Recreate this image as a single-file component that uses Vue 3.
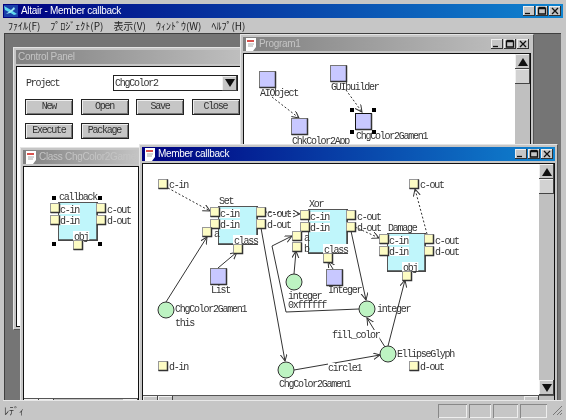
<script setup>
// pixel data below is in screen coordinates, each svg gets a viewBox at its client origin
const comp = (x, y, w, h, name, bottom, extra = []) => ({ x, y, w, h, name, bottom, extra })

const windows = [
  {
    id: 'control', title: 'Control Panel', left: 13, top: 47, width: 250, height: 283, noIcon: true
  },
  {
    id: 'program', title: 'Program1', left: 240, top: 34, width: 294, client: { x: 244, y: 54, w: 271, h: 140 }, vscroll: true,
    edges: [
      { d: 'M272 97L299 118', dashed: true, arrow: true },
      { d: 'M346 90L362 112', dashed: true, arrow: true }
    ],
    squares: [
      { x: 259, y: 71 }, { x: 330, y: 65 }, { x: 291, y: 118 }, { x: 355, y: 113, sel: true }
    ],
    handles: [[352, 110], [374, 110], [352, 132], [374, 132]],
    comps: [],
    circles: [],
    ports: [],
    texts: [
      { x: 260, y: 96, t: 'AIObject' },
      { x: 331, y: 90, t: 'GUIbuilder' },
      { x: 292, y: 144, t: 'ChkColor2App' },
      { x: 356, y: 139, t: 'ChgColor2Gamen1' }
    ]
  },
  {
    id: 'class', title: 'Class ChgColor2Gamen1', left: 20, top: 147, width: 122, client: { x: 24, y: 167, w: 114, h: 231 }, hscroll: true,
    edges: [], squares: [], circles: [], ports: [], texts: [],
    handles: [[54, 198], [100, 198], [54, 244], [100, 244]],
    comps: [comp(58, 202, 39, 38, 'callback', 'obj')]
  },
  {
    id: 'member', title: 'Member callback', active: true, left: 139, top: 144, width: 419, client: { x: 143, y: 164, w: 396, h: 231 }, vscroll: true, hscroll: true,
    edges: [
      { d: 'M168 188L210 211', dashed: true, arrow: true },
      { d: 'M166 302L207 237', arrow: true },
      { d: 'M218 268L237 252', arrow: true },
      { d: 'M261 228L285 361', arrow: true },
      { d: 'M359 309L286 312L272 246L292 236', arrow: true },
      { d: 'M294 274L296 251', arrow: true },
      { d: 'M333 269L328 261', arrow: true },
      { d: 'M351 231L366 300', arrow: true },
      { d: 'M265 212L300 214', dashed: true, arrow: true },
      { d: 'M355 227L379 238', dashed: true, arrow: true },
      { d: 'M427 234L415 189', dashed: true, arrow: true },
      { d: 'M388 346L405 280', arrow: true },
      { d: 'M385 347L378 336L367 318', arrow: true },
      { d: 'M294 370L380 355', arrow: true }
    ],
    squares: [{ x: 210, y: 268 }, { x: 326, y: 269 }],
    circles: [{ x: 166, y: 310 }, { x: 294, y: 282 }, { x: 286, y: 370 }, { x: 367, y: 309 }, { x: 388, y: 354 }],
    ports: [{ x: 158, y: 179 }, { x: 409, y: 179 }, { x: 158, y: 361 }, { x: 409, y: 361 }],
    handles: [],
    comps: [
      comp(218, 206, 39, 38, 'Set', 'class', [{ x: 202, y: 227, t: 'a' }]),
      comp(308, 209, 39, 44, 'Xor', 'class', [{ x: 292, y: 231, t: 'a' }, { x: 292, y: 242, t: 'b' }]),
      comp(387, 233, 38, 38, 'Damage', 'obj')
    ],
    texts: [
      { x: 169, y: 188, t: 'c-in' },
      { x: 420, y: 188, t: 'c-out' },
      { x: 169, y: 370, t: 'd-in' },
      { x: 420, y: 370, t: 'd-out' },
      { x: 211, y: 293, t: 'List' },
      { x: 328, y: 293, t: 'Integer' },
      { x: 175, y: 312, t: 'ChgColor2Gamen1' },
      { x: 175, y: 326, t: 'this' },
      { x: 288, y: 299, t: 'integer' },
      { x: 288, y: 308, t: '0xffffff' },
      { x: 279, y: 387, t: 'ChgColor2Gamen1' },
      { x: 377, y: 312, t: 'integer' },
      { x: 397, y: 357, t: 'EllipseGlyph' },
      { x: 332, y: 338, t: 'fill_color', bg: true },
      { x: 328, y: 371, t: 'circle1', bg: true }
    ]
  }
]

const menus = ['ﾌｧｲﾙ(F)', 'ﾌﾟﾛｼﾞｪｸﾄ(P)', '表示(V)', 'ｳｨﾝﾄﾞｳ(W)', 'ﾍﾙﾌﾟ(H)']
const captionPaths = [
  'M2 7.5H7',
  'M2.5 2.5H9.5V8H2.5ZM2.5 1.5H9.5',
  'M3 2L9 8M9 2L3 8'
]
const statusPanels = [29, 22, 25, 27]

// mdi area starts at (4, 33) on screen
const winStyle = (w) => ({
  left: w.left - 4 + 'px',
  top: w.top - 33 + 'px',
  width: w.width + 'px',
  height: w.height ? w.height + 'px' : 'auto'
})
const viewBox = (c) => `${c.x} ${c.y} ${c.w} ${c.h}`
</script>

<template>
  <div class="app">
    <div class="titlebar main-title">
      <svg class="app-icon" width="14" height="12" viewBox="0 0 14 12">
        <rect width="14" height="12" fill="#1a3fa8" />
        <path d="M0 1L7 5L13 9L10 10L5 7L1 5Z" fill="#5fd8ee" />
        <path d="M2 9L7 5L10 2L11 4L6 8Z" fill="#9fe8f5" />
      </svg>
      <span class="title-text">Altair - Member callback</span>
      <div class="caption">
        <button v-for="p in captionPaths" :key="p" class="cap-btn">
          <svg width="12" height="10" viewBox="0 0 12 10"><path :d="p" /></svg>
        </button>
      </div>
    </div>

    <div class="menubar">
      <span v-for="m in menus" :key="m" class="menu-item">{{ m }}</span>
    </div>

    <div class="mdi">
      <div v-for="w in windows" :key="w.id" class="win" :class="w.id" :style="winStyle(w)">
        <div class="titlebar" :class="{ inactive: !w.active }">
          <svg v-if="!w.noIcon" class="doc-icon" width="12" height="13" viewBox="0 0 12 13">
            <path d="M1 0H11V9L8 13H1Z" fill="#fff" />
            <rect x="2" y="2" width="7" height="2" fill="#d9534f" />
            <path d="M3 6H9M3 8H8" stroke="#aaa" />
          </svg>
          <span class="title-text">{{ w.title }}</span>
          <div v-if="!w.noIcon && w.id !== 'class'" class="caption">
            <button v-for="p in captionPaths" :key="p" class="cap-btn">
              <svg width="12" height="10" viewBox="0 0 12 10"><path :d="p" /></svg>
            </button>
          </div>
        </div>

        <div class="client">
          <div v-if="w.id === 'control'" class="panel">
            <div class="panel-row project-row">
              <span class="project-label">Project</span>
              <div class="combo">
                <span class="combo-value">ChgColor2</span>
                <span class="scroll-btn combo-btn"><i class="tri-down"></i></span>
              </div>
            </div>
            <div class="panel-row">
              <span class="btn">New</span>
              <span class="btn">Open</span>
              <span class="btn">Save</span>
              <span class="btn">Close</span>
            </div>
            <div class="panel-row">
              <span class="btn">Execute</span>
              <span class="btn">Package</span>
            </div>
          </div>

          <template v-else>
            <div class="pane">
              <svg class="canvas" :width="w.client.w" :height="w.client.h" :viewBox="viewBox(w.client)">
                <defs>
                  <marker :id="'arrow-' + w.id" markerUnits="userSpaceOnUse" markerWidth="8" markerHeight="8" refX="7" refY="3.5" orient="auto">
                    <path d="M0 0L7 3.5L0 7" fill="none" stroke="#333" />
                  </marker>
                </defs>

                <g v-for="c in w.comps" :key="c.name">
                  <rect class="comp-body" :x="c.x + 0.5" :y="c.y + 0.5" :width="c.w" :height="c.h" />
                  <path class="comp-shade" :d="`M${c.x} ${c.y + c.h}H${c.x + c.w}V${c.y}`" />
                  <rect class="label-bg" :x="c.x + 1" :y="c.y + 3" width="21" height="9" />
                  <rect class="label-bg" :x="c.x + 1" :y="c.y + 14" width="21" height="9" />
                  <rect class="label-bg" :x="c.x + 15" :y="c.y + c.h - 9" :width="c.bottom.length * 4.75 + 2" height="9" />
                </g>

                <path
                  v-for="e in w.edges"
                  :key="e.d"
                  class="edge"
                  :class="{ dashed: e.dashed }"
                  :d="e.d"
                  :marker-end="e.arrow ? `url(#arrow-${w.id})` : null"
                />

                <g v-for="s in w.squares" :key="s.x">
                  <rect class="square" :class="{ sel: s.sel }" :x="s.x + 0.5" :y="s.y + 0.5" width="16" height="16" />
                  <path class="square-shade" :d="`M${s.x + 0.5} ${s.y + 16.5}H${s.x + 16.5}V${s.y + 0.5}`" />
                </g>

                <circle v-for="c in w.circles" :key="c.x" class="node" :cx="c.x" :cy="c.y" r="8" />

                <g v-for="p in w.ports" :key="p.x + '-' + p.y">
                  <rect class="port" :x="p.x + 0.5" :y="p.y + 0.5" width="9" height="9" />
                  <path class="port-shade" :d="`M${p.x + 0.5} ${p.y + 9.5}H${p.x + 9.5}V${p.y + 0.5}`" />
                </g>

                <g v-for="c in w.comps" :key="c.name + '-ports'">
                  <g v-for="p in [
                    { x: c.x - 8, y: c.y + 1 }, { x: c.x - 8, y: c.y + 13 },
                    { x: c.x + c.w - 1, y: c.y + 1 }, { x: c.x + c.w - 1, y: c.y + 13 },
                    { x: c.x + 15, y: c.y + c.h },
                    ...c.extra
                  ]" :key="p.x + '-' + p.y">
                    <rect class="port" :x="p.x + 0.5" :y="p.y + 0.5" width="9" height="9" />
                    <path class="port-shade" :d="`M${p.x + 0.5} ${p.y + 9.5}H${p.x + 9.5}V${p.y + 0.5}`" />
                    <text v-if="p.t" class="label" :x="p.x + 12" :y="p.y + 10">{{ p.t }}</text>
                  </g>
                  <text class="label" :x="c.x + 1" :y="c.y - 2">{{ c.name }}</text>
                  <text class="label" :x="c.x + 2" :y="c.y + 11">c-in</text>
                  <text class="label" :x="c.x + 2" :y="c.y + 22">d-in</text>
                  <text class="label" :x="c.x + c.w + 10" :y="c.y + 11">c-out</text>
                  <text class="label" :x="c.x + c.w + 10" :y="c.y + 22">d-out</text>
                  <text class="label" :x="c.x + 16" :y="c.y + c.h">{{ c.bottom }}</text>
                </g>

                <g v-for="t in w.texts" :key="t.t + t.x">
                  <rect v-if="t.bg" class="label-bg" :x="t.x" :y="t.y - 8" :width="t.t.length * 4.75" height="10" />
                  <text class="label" :x="t.x" :y="t.y">{{ t.t }}</text>
                </g>

                <rect v-for="h in w.handles" :key="h[0] + '-' + h[1]" :x="h[0] - 2" :y="h[1] - 2" width="4" height="4" fill="#000" />
              </svg>

              <div v-if="w.vscroll" class="vscroll">
                <span class="scroll-btn"><i class="tri-up"></i></span>
                <span class="scroll-btn thumb"></span>
                <span class="track"></span>
                <span class="scroll-btn"><i class="tri-down"></i></span>
              </div>
            </div>

            <div v-if="w.hscroll" class="hscroll" :class="{ corner: w.vscroll }">
              <span class="scroll-btn"></span>
              <span class="scroll-btn"></span>
              <span class="track"></span>
              <span class="scroll-btn"></span>
            </div>
          </template>
        </div>
      </div>
    </div>

    <div class="statusbar">
      <span class="status-text">ﾚﾃﾞｨ</span>
      <span v-for="(p, i) in statusPanels" :key="i" class="status-panel" :class="'p' + i"></span>
      <svg class="grip" width="11" height="11" viewBox="0 0 11 11">
        <path d="M1 10L10 1M5 10L10 5M8 10L10 8" stroke="#777" fill="none" />
      </svg>
    </div>
  </div>
</template>

<style>
html, body {
  margin: 0;
  overflow: hidden;
  background: #c6c6c6;
}
</style>

<style scoped>
.app {
  width: 566px;
  height: 420px;
  box-sizing: border-box;
  padding: 4px 3px 2px;
  display: flex;
  flex-direction: column;
  background: #c6c6c6;
  font-family: "Liberation Mono", monospace;
  color: #333;
  filter: blur(0.35px);
}

.titlebar {
  height: 14px;
  flex: none;
  display: flex;
  align-items: center;
  background: linear-gradient(90deg, #000080, #1084d0);
  color: #fff;
  overflow: hidden;
}

.titlebar.inactive {
  background: linear-gradient(90deg, #808080, #c4c4c4);
  color: #c4c4c4;
}

.title-text {
  font-family: "Liberation Sans", sans-serif;
  font-size: 10px;
  letter-spacing: -0.3px;
  line-height: 14px;
  white-space: nowrap;
}

.main-title .title-text {
  margin-left: 3px;
}

.app-icon {
  margin-left: 1px;
  flex: none;
}

.doc-icon {
  margin: 0 2px 0 2px;
  flex: none;
}

.control .title-text {
  margin-left: 2px;
}

.caption {
  margin-left: auto;
  margin-right: 2px;
  display: flex;
  gap: 1px;
}

.cap-btn {
  width: 12px;
  height: 10px;
  padding: 0;
  border: 0;
  background: #c6c6c6;
  box-shadow: inset -1px -1px 0 #333, inset 1px 1px 0 #eee;
  display: block;
}

.cap-btn svg {
  display: block;
}

.cap-btn path {
  fill: none;
  stroke: #111;
  stroke-width: 1.3;
}

.menubar {
  height: 15px;
  flex: none;
  display: flex;
  align-items: center;
  padding-left: 5px;
  gap: 10px;
  font-family: "Noto Sans CJK JP", sans-serif;
  font-size: 10px;
  color: #222;
}

.menu-item {
  white-space: nowrap;
}

.mdi {
  position: relative;
  flex: 1;
  margin: 0 2px 0 1px;
  background: #757575;
  box-shadow: inset 1px 1px 0 #404040;
  overflow: hidden;
}

.win {
  position: absolute;
  box-sizing: border-box;
  padding: 2px;
  border: 1px solid;
  border-color: #e4e4e4 #555 #555 #e4e4e4;
  background: #c6c6c6;
  display: flex;
  flex-direction: column;
}

.client {
  margin-top: 2px;
  flex: 1;
  border: 1px solid #111;
  background: #fff;
  min-height: 0;
  display: flex;
  flex-direction: column;
}

.panel {
  padding: 8px 0 0 8px;
  display: flex;
  flex-direction: column;
  gap: 8px;
}

.panel-row {
  display: flex;
  gap: 7.5px;
  height: 16px;
  align-items: center;
}

.project-row {
  gap: 0;
}

.project-label {
  width: 87px;
  margin-left: 1px;
  font-size: 10px;
  letter-spacing: -1.25px;
}

.combo {
  width: 125px;
  height: 16px;
  box-sizing: border-box;
  border: 1px solid #222;
  display: flex;
  align-items: center;
  justify-content: space-between;
  font-size: 10px;
  letter-spacing: -1.25px;
}

.combo-value {
  padding-left: 1px;
}

.combo-btn {
  width: 15px;
  height: 14px;
}

.btn {
  width: 48px;
  height: 16px;
  box-sizing: border-box;
  background: #c6c6c6;
  border: 1px solid #222;
  box-shadow: inset 1px 1px 0 #eee, inset -1px -1px 0 #777;
  text-align: center;
  font-size: 10px;
  line-height: 14px;
  letter-spacing: -1.25px;
}

.pane {
  display: flex;
  flex: none;
}

.canvas {
  display: block;
  flex: none;
}

.comp-body {
  fill: #c0f6fb;
  stroke: #555;
}

.comp-shade {
  fill: none;
  stroke: #444;
  stroke-width: 1.5;
}

.label-bg {
  fill: #fff;
}

.edge {
  fill: none;
  stroke: #333;
  stroke-width: 1;
}

.edge.dashed {
  stroke-dasharray: 2 2;
}

.square {
  fill: #c8c8ff;
  stroke: #777;
}

.square.sel {
  stroke: #111;
}

.square-shade {
  fill: none;
  stroke: #333;
  stroke-width: 1.5;
}

.node {
  fill: #bdf3c2;
  stroke: #333;
}

.port {
  fill: #fdfcc4;
  stroke: #999;
}

.port-shade {
  fill: none;
  stroke: #333;
  stroke-width: 1.5;
}

.label {
  font-family: "Liberation Mono", monospace;
  font-size: 10px;
  letter-spacing: -1.25px;
  fill: #333;
}

.vscroll {
  width: 15px;
  flex: none;
  display: flex;
  flex-direction: column;
  background: #c0c0c0;
}

.track {
  flex: 1;
  background: #c0c0c0;
}

.scroll-btn {
  width: 15px;
  height: 15px;
  box-sizing: border-box;
  flex: none;
  display: flex;
  align-items: center;
  justify-content: center;
  background: #c6c6c6;
  box-shadow: inset -1px -1px 0 #444, inset 1px 1px 0 #f0f0f0;
}

.thumb {
  background: #d2d2d2;
}

.tri-up,
.tri-down {
  width: 0;
  height: 0;
  border-left: 5px solid transparent;
  border-right: 5px solid transparent;
}

.tri-up {
  border-bottom: 8px solid #111;
}

.tri-down {
  border-top: 8px solid #111;
}

.hscroll {
  display: flex;
  flex: none;
  height: 15px;
  border-top: 1px solid #555;
  background: #c0c0c0;
}

.hscroll.corner {
  padding-right: 15px;
}

.statusbar {
  height: 18px;
  flex: none;
  box-sizing: border-box;
  padding: 3px 0 1px 1px;
  display: flex;
  align-items: center;
  gap: 2px;
  position: relative;
  border-top: 1px solid #e8e8e8;
}

.status-text {
  margin-right: auto;
  font-family: "Noto Sans CJK JP", sans-serif;
  font-size: 10px;
}

.status-panel {
  height: 14px;
  box-sizing: border-box;
  box-shadow: inset 1px 1px 0 #888, inset -1px -1px 0 #eee;
}

.p0 { width: 29px; }
.p1 { width: 22px; }
.p2 { width: 25px; }
.p3 { width: 27px; margin-right: 3px; }

.grip {
  flex: none;
}
</style>
